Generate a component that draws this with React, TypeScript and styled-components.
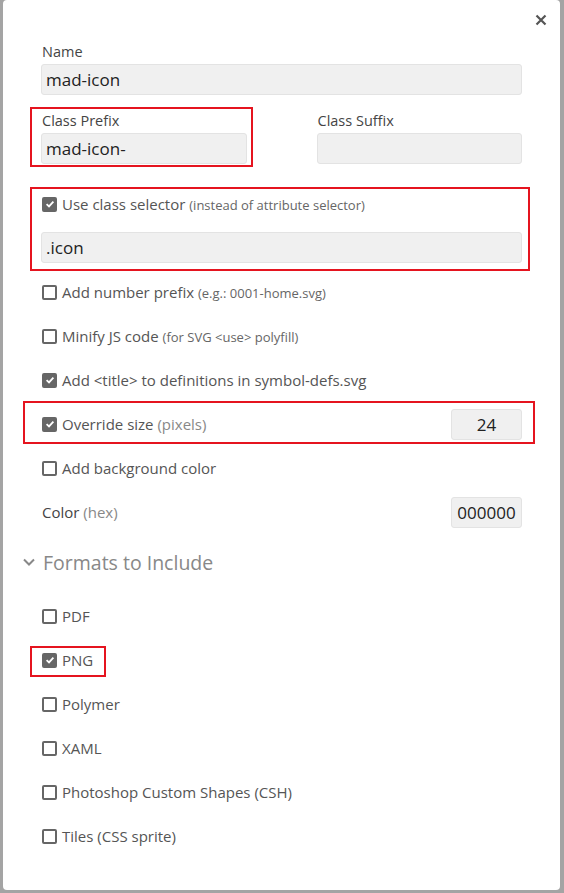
import React from "react";
import styled, { createGlobalStyle } from "styled-components";

const Global = createGlobalStyle`
  html, body { margin: 0; padding: 0; }
  body {
    background: #a4a4a4;
    font-family: "Open Sans", "Noto Sans", sans-serif;
    width: 564px;
    height: 893px;
    overflow: hidden;
  }
  * { box-sizing: border-box; }
`;

const Dialog = styled.div`
  position: relative;
  margin: 0 4px 0 3px;
  height: 890px;
  background: #fff;
  border-radius: 4px;
  padding: 42px 38px 0 38px;
`;

const Close = styled.button`
  position: absolute;
  top: 12px;
  right: 11px;
  width: 16px;
  height: 16px;
  padding: 0;
  border: 0;
  background: none;
  display: flex;
  align-items: center;
  justify-content: center;
`;

const Label = styled.div`
  font-size: 14.5px;
  line-height: 20px;
  color: #444;
  margin-bottom: 2px;
  padding-left: 1px;
`;

const TextInput = styled.div<{ $center?: boolean; $width?: number }>`
  height: 31px;
  width: ${(p) => (p.$width ? `${p.$width}px` : "100%")};
  background: #f0f0f0;
  border: 1px solid #e3e3e3;
  border-radius: 3px;
  padding: 0 ${(p) => (p.$center ? "0" : "4px")};
  display: flex;
  align-items: center;
  justify-content: ${(p) => (p.$center ? "center" : "flex-start")};
  font-size: 17px;
  color: #222;
`;

const TwoCols = styled.div`
  display: grid;
  grid-template-columns: 1fr 1fr;
  column-gap: 70px;
  margin-top: 16px;
`;

const Highlight = styled.div<{ $inset: string }>`
  position: relative;
  &::after {
    content: "";
    position: absolute;
    inset: ${(p) => p.$inset};
    border: 2px solid #e5141f;
    pointer-events: none;
  }
`;

const Field = styled.div``;

const ClassBlock = styled.div`
  margin-top: 30px;
`;

const CheckLine = styled.div`
  display: flex;
  align-items: center;
  height: 20px;
`;

const Row = styled.div`
  display: flex;
  align-items: center;
  justify-content: space-between;
  height: 44px;
`;

const RowSpacer = styled.div`
  height: 7px;
`;

const Box = styled.span<{ $checked?: boolean }>`
  width: 15px;
  height: 15px;
  border: 2px solid #666;
  border-radius: 2px;
  background: ${(p) => (p.$checked ? "#666" : "#fff")};
  display: inline-flex;
  align-items: center;
  justify-content: center;
  margin-left: 1px;
  margin-right: 5px;
  flex-shrink: 0;
`;

const CheckLabel = styled.span`
  display: inline-flex;
  align-items: center;
  height: 20px;
  font-size: 15px;
  color: #555;
  white-space: nowrap;
`;

const LabelText = styled.span``;

const Hint = styled.span<{ $small?: boolean }>`
  font-size: ${(p) => (p.$small ? "13px" : "15px")};
  color: ${(p) => (p.$small ? "#666" : "#888")};
`;

const PlainLabel = styled.span`
  font-size: 15px;
  color: #444;
  padding-left: 1px;
`;

const Heading = styled.div`
  display: flex;
  align-items: center;
  height: 40px;
  margin: 8px 0 12px -19px;
  font-size: 19.5px;
  color: #888;
  gap: 7px;
`;

const PngMark = styled(Highlight)`
  display: inline-flex;
`;

const IconInputGap = styled.div`
  margin-top: 18px;
`;

const Check = ({ checked }: { checked?: boolean }) => (
  <Box $checked={checked}>
    {checked && (
      <svg width="10" height="10" viewBox="0 0 10 10">
        <path d="M1.6 5.2 L4 7.4 L8.4 2.6" fill="none" stroke="#fff" strokeWidth="1.8" />
      </svg>
    )}
  </Box>
);

const Option = ({
  checked,
  children,
}: {
  checked?: boolean;
  children: React.ReactNode;
}) => (
  <CheckLabel>
    <Check checked={checked} />
    <LabelText>{children}</LabelText>
  </CheckLabel>
);

export default function App() {
  return (
    <>
      <Global />
      <Dialog>
        <Close aria-label="close">
          <svg width="12" height="12" viewBox="0 0 12 12">
            <path d="M1.5 1.5 L10.5 10.5 M10.5 1.5 L1.5 10.5" stroke="#555" strokeWidth="2.2" />
          </svg>
        </Close>

        <Field>
          <Label>Name</Label>
          <TextInput>mad-icon</TextInput>
        </Field>

        <TwoCols>
          <Highlight $inset="-4px -6px -3px -11px">
            <Label>Class Prefix</Label>
            <TextInput>mad-icon-</TextInput>
          </Highlight>
          <Field>
            <Label>Class Suffix</Label>
            <TextInput />
          </Field>
        </TwoCols>

        <ClassBlock>
          <Highlight $inset="-7px -8px -8px -11px">
            <CheckLine>
              <Option checked>
                Use class selector <Hint $small>(instead of attribute selector)</Hint>
              </Option>
            </CheckLine>
            <IconInputGap>
              <TextInput>.icon</TextInput>
            </IconInputGap>
          </Highlight>
        </ClassBlock>

        <RowSpacer />

        <Row>
          <Option>
            Add number prefix <Hint $small>(e.g.: 0001-home.svg)</Hint>
          </Option>
        </Row>
        <Row>
          <Option>
            Minify JS code <Hint $small>(for SVG &lt;use&gt; polyfill)</Hint>
          </Option>
        </Row>
        <Row>
          <Option checked>Add &lt;title&gt; to definitions in symbol-defs.svg</Option>
        </Row>
        <Highlight $inset="-1px -13px 2px -18px">
          <Row>
            <Option checked>
              Override size <Hint>(pixels)</Hint>
            </Option>
            <TextInput $center $width={71}>24</TextInput>
          </Row>
        </Highlight>
        <Row>
          <Option>Add background color</Option>
        </Row>
        <Row>
          <PlainLabel>
            Color <Hint>(hex)</Hint>
          </PlainLabel>
          <TextInput $center $width={71}>000000</TextInput>
        </Row>

        <Heading>
          <svg width="14" height="14" viewBox="0 0 14 14">
            <path d="M2 4.5 L7 9.5 L12 4.5" fill="none" stroke="#888" strokeWidth="2" />
          </svg>
          Formats to Include
        </Heading>

        <Row>
          <Option>PDF</Option>
        </Row>
        <Row>
          <PngMark $inset="-4px -13px -7px -11px">
            <Option checked>PNG</Option>
          </PngMark>
        </Row>
        <Row>
          <Option>Polymer</Option>
        </Row>
        <Row>
          <Option>XAML</Option>
        </Row>
        <Row>
          <Option>Photoshop Custom Shapes (CSH)</Option>
        </Row>
        <Row>
          <Option>Tiles (CSS sprite)</Option>
        </Row>
      </Dialog>
    </>
  );
}
